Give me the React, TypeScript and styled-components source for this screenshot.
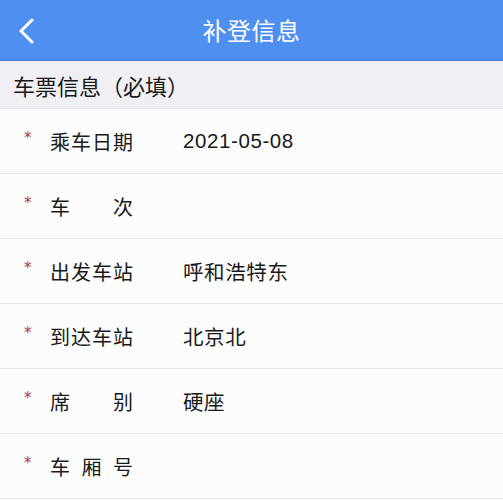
import React from "react";
import styled, { createGlobalStyle } from "styled-components";

const Global = createGlobalStyle`
  html, body { margin: 0; padding: 0; background: #fcfcfc; }
  body { font-family: "Noto Sans CJK SC", "Noto Sans", sans-serif; }
`;

const Page = styled.div`
  width: 503px;
  display: flex;
  flex-direction: column;
`;

const Header = styled.header`
  height: 60px;
  background: #4f8ff0;
  border-bottom: 1px solid #3f7fe0;
  display: flex;
  align-items: center;
  justify-content: center;
  position: relative;
`;

const Back = styled.button`
  position: absolute;
  left: 14px;
  top: 17px;
  width: 26px;
  height: 28px;
  padding: 0;
  border: 0;
  background: transparent;
  display: flex;
  align-items: center;
  justify-content: center;
`;

const Title = styled.h1`
  margin: 0;
  color: #ffffff;
  font-size: 24px;
  font-weight: 400;
  line-height: 1;
  letter-spacing: 0.5px;
`;

const Section = styled.div`
  height: 47px;
  background: #efeff4;
  display: flex;
  align-items: center;
  padding-left: 13px;
  font-size: 22px;
  color: #1a1a1a;
  border-bottom: 1px solid #e4e4e8;
`;

const Row = styled.div`
  height: 64px;
  display: flex;
  align-items: center;
  background: #fcfcfc;
  border-bottom: 1px solid #e6e6e9;
`;

const Star = styled.span`
  width: 50px;
  padding-left: 24px;
  box-sizing: border-box;
  color: #b5393a;
  font-family: "DejaVu Sans", sans-serif;
  font-size: 15px;
  align-self: center;
  margin-top: -6px;
`;

const Label = styled.span`
  width: 83px;
  display: flex;
  justify-content: space-between;
  font-size: 20px;
  color: #1a1a1a;
`;

const Value = styled.span`
  margin-left: 50px;
  font-family: "Liberation Sans", "Noto Sans CJK SC", sans-serif;
  font-size: 20.5px;
  letter-spacing: 0.6px;
  color: #1a1a1a;
`;

const rows: { label: string; value: string }[] = [
  { label: "乘车日期", value: "2021-05-08" },
  { label: "车次", value: "" },
  { label: "出发车站", value: "呼和浩特东" },
  { label: "到达车站", value: "北京北" },
  { label: "席别", value: "硬座" },
  { label: "车厢号", value: "" },
];

export default function App() {
  return (
    <Page>
      <Global />
      <Header>
        <Back aria-label="返回">
          <svg width="20" height="26" viewBox="0 0 20 26" fill="none">
            <path d="M15 2 L4 13 L15 24" stroke="#ffffff" strokeWidth="3" strokeLinecap="round" strokeLinejoin="round" />
          </svg>
        </Back>
        <Title>补登信息</Title>
      </Header>
      <Section>车票信息（必填）</Section>
      {rows.map((r) => (
        <Row key={r.label}>
          <Star>*</Star>
          <Label>
            {r.label.split("").map((c, i) => (
              <span key={i}>{c}</span>
            ))}
          </Label>
          <Value>{r.value}</Value>
        </Row>
      ))}
    </Page>
  );
}
